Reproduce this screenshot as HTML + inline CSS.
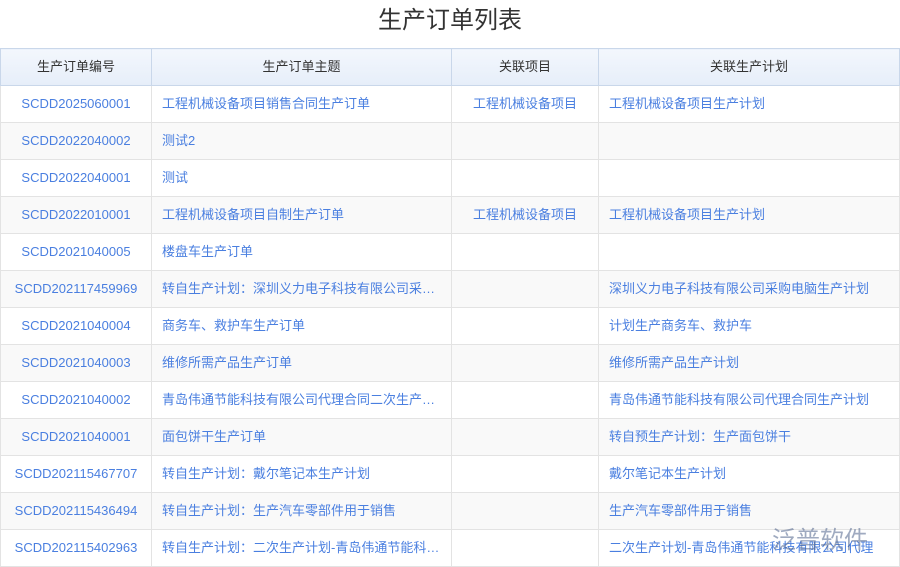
<!DOCTYPE html>
<html><head><meta charset="utf-8"><style>
body{margin:0;width:900px;height:567px;overflow:hidden;background:#fff;font-family:"Liberation Sans","Noto Sans CJK SC",sans-serif;}
h1{margin:0;position:absolute;top:4px;left:0;width:900px;text-align:center;font-size:24px;font-weight:normal;color:#333;line-height:34px;}
table{position:absolute;top:48px;left:0;border-collapse:collapse;table-layout:fixed;width:899px;}
td,th{border:1px solid #e3e3e3;height:36px;line-height:35px;padding:0 10px 1px;box-sizing:border-box;font-size:13px;white-space:nowrap;overflow:hidden;text-overflow:ellipsis;color:#4a7fe0;}
th{background:linear-gradient(#f3f7fd,#e6eef9);color:#333;font-weight:normal;border-color:#c9d7ea;}
td.c{text-align:center;}
tr:nth-child(odd) td{background:#f9f9f9;}
.wm{position:absolute;left:772px;top:520px;font-size:24px;color:rgba(80,100,140,.55);}
</style></head><body>
<h1>生产订单列表</h1>
<table>
<colgroup><col style="width:151px"><col style="width:300px"><col style="width:147px"><col style="width:301px"></colgroup>
<tr><th>生产订单编号</th><th>生产订单主题</th><th>关联项目</th><th>关联生产计划</th></tr>
<tr><td class="c">SCDD2025060001</td><td>工程机械设备项目销售合同生产订单</td><td class="c">工程机械设备项目</td><td>工程机械设备项目生产计划</td></tr>
<tr><td class="c">SCDD2022040002</td><td>测试2</td><td></td><td></td></tr>
<tr><td class="c">SCDD2022040001</td><td>测试</td><td></td><td></td></tr>
<tr><td class="c">SCDD2022010001</td><td>工程机械设备项目自制生产订单</td><td class="c">工程机械设备项目</td><td>工程机械设备项目生产计划</td></tr>
<tr><td class="c">SCDD2021040005</td><td>楼盘车生产订单</td><td></td><td></td></tr>
<tr><td class="c">SCDD202117459969</td><td>转自生产计划：深圳义力电子科技有限公司采购电脑生产计划</td><td></td><td>深圳义力电子科技有限公司采购电脑生产计划</td></tr>
<tr><td class="c">SCDD2021040004</td><td>商务车、救护车生产订单</td><td></td><td>计划生产商务车、救护车</td></tr>
<tr><td class="c">SCDD2021040003</td><td>维修所需产品生产订单</td><td></td><td>维修所需产品生产计划</td></tr>
<tr><td class="c">SCDD2021040002</td><td>青岛伟通节能科技有限公司代理合同二次生产订单</td><td></td><td>青岛伟通节能科技有限公司代理合同生产计划</td></tr>
<tr><td class="c">SCDD2021040001</td><td>面包饼干生产订单</td><td></td><td>转自预生产计划：生产面包饼干</td></tr>
<tr><td class="c">SCDD202115467707</td><td>转自生产计划：戴尔笔记本生产计划</td><td></td><td>戴尔笔记本生产计划</td></tr>
<tr><td class="c">SCDD202115436494</td><td>转自生产计划：生产汽车零部件用于销售</td><td></td><td>生产汽车零部件用于销售</td></tr>
<tr><td class="c">SCDD202115402963</td><td>转自生产计划：二次生产计划-青岛伟通节能科技有限公司</td><td></td><td>二次生产计划-青岛伟通节能科技有限公司代理</td></tr>
</table>
<div class="wm">泛普软件</div>
</body></html>
